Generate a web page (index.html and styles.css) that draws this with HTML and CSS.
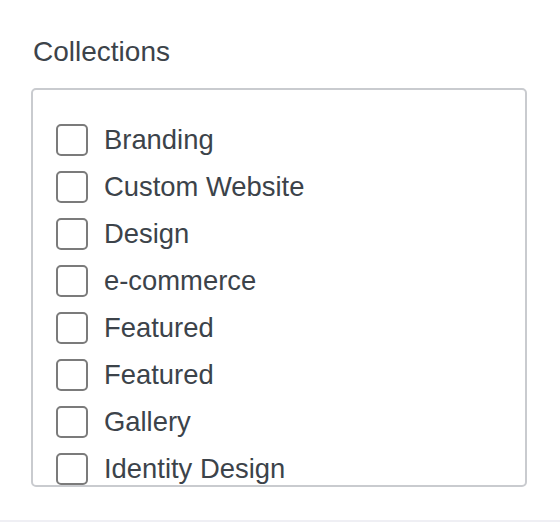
FILE: index.html
```html
<!DOCTYPE html>
<html>
<head>
    <title>Collections</title>
    <link rel="stylesheet" href="styles.css">
</head>
<body>
    <div class="panel">
        <h3 class="panel-title">Collections</h3>
        <div class="term-box">
            <ul class="term-list">
                <li><label><input type="checkbox"><span>Branding</span></label></li>
                <li><label><input type="checkbox"><span>Custom Website</span></label></li>
                <li><label><input type="checkbox"><span>Design</span></label></li>
                <li><label><input type="checkbox"><span>e-commerce</span></label></li>
                <li><label><input type="checkbox"><span>Featured</span></label></li>
                <li><label><input type="checkbox"><span>Featured</span></label></li>
                <li><label><input type="checkbox"><span>Gallery</span></label></li>
                <li><label><input type="checkbox"><span>Identity Design</span></label></li>
            </ul>
        </div>
    </div>
    <div class="next-panel"></div>
</body>
</html>
```

FILE: styles.css
```css
body { margin: 0; background: #fff; font-family: "Liberation Sans", Arial, sans-serif; color: #3c434a; }
.panel {
    height: 520px;
    box-sizing: border-box;
    padding: 36px 33px 0 31px;
}
.panel-title {
    margin: 0 0 20px 2px;
    font-size: 28px;
    line-height: 32px;
    font-weight: 500;
    color: #3c434a;
}
.term-box {
    height: 399px;
    box-sizing: border-box;
    border: 2px solid #c9cbcf;
    border-radius: 5px;
    overflow: hidden;
}
.term-list {
    list-style: none;
    margin: 0;
    padding: 26px 0 0 23px;
}
.term-list li { height: 47.14px; }
.term-list label {
    display: flex;
    align-items: center;
    gap: 16px;
    height: 100%;
    font-size: 27.4px;
}
.term-list input {
    appearance: none;
    -webkit-appearance: none;
    margin: 0;
    width: 32px;
    height: 32px;
    box-sizing: border-box;
    border: 2px solid #7b7b7b;
    border-radius: 5px;
    background: #fff;
    flex: none;
}
.next-panel { height: 2px; background: #efeff4; }
```
